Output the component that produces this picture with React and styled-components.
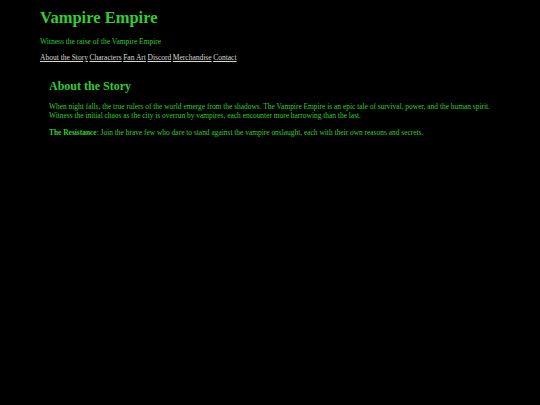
import React from "react";
import styled, { createGlobalStyle } from "styled-components";

const Global = createGlobalStyle`
  html, body { margin: 0; padding: 0; background: #000; }
  body { font-family: "Liberation Serif", "Times New Roman", serif; color: #32cd32; }
`;

const Page = styled.div`
  padding: 8px 40px;
`;

const Header = styled.header`
  display: flex;
  flex-direction: column;
`;

const Title = styled.h1`
  margin: 0;
  font-size: 16.5px;
  line-height: 20px;
  font-weight: bold;
  color: #32cd32;
`;

const Tagline = styled.p`
  margin: 9px 0 0;
  font-size: 7.5px;
  line-height: 10px;
  color: #32cd32;
`;

const Nav = styled.nav`
  margin-top: 6px;
  font-size: 7.5px;
  line-height: 10px;
  display: flex;
  gap: 1.6px;
`;

const NavLink = styled.a`
  color: #d8d8d0;
  text-decoration: underline;
`;

const Section = styled.section`
  margin-top: 15px;
  padding-left: 9px;
`;

const Heading = styled.h2`
  margin: 0;
  font-size: 12px;
  line-height: 16px;
  font-weight: bold;
  color: #32cd32;
`;

const Para = styled.p`
  margin: ${(p) => p.$top}px 0 0;
  font-size: 7.43px;
  line-height: 9px;
  color: #32cd32;
`;

const Strong = styled.strong`
  font-weight: bold;
`;

const links = ["About the Story", "Characters", "Fan Art", "Discord", "Merchandise", "Contact"];

export default function App() {
  return (
    <>
      <Global />
      <Page>
        <Header>
          <Title>Vampire Empire</Title>
          <Tagline>Witness the raise of the Vampire Empire</Tagline>
          <Nav>
            {links.map((l) => (
              <NavLink key={l} href="#">{l}</NavLink>
            ))}
          </Nav>
        </Header>
        <Section>
          <Heading>About the Story</Heading>
          <Para $top={8}>
            When night falls, the true rulers of the world emerge from the shadows. The Vampire Empire is an epic tale of survival, power, and the human spirit. Witness the initial chaos as the city is overrun by vampires, each encounter more harrowing than the last.
          </Para>
          <Para $top={8}>
            <Strong>The Resistance</Strong>: Join the brave few who dare to stand against the vampire onslaught, each with their own reasons and secrets.
          </Para>
        </Section>
      </Page>
    </>
  );
}
